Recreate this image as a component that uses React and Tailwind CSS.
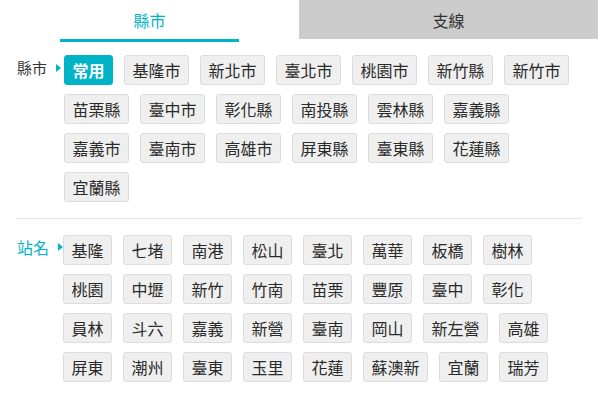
import React from "react";

const counties = [
  "基隆市","新北市","臺北市","桃園市","新竹縣","新竹市",
  "苗栗縣","臺中市","彰化縣","南投縣","雲林縣","嘉義縣",
  "嘉義市","臺南市","高雄市","屏東縣","臺東縣","花蓮縣","宜蘭縣",
];

const stations = [
  "基隆","七堵","南港","松山","臺北","萬華","板橋","樹林",
  "桃園","中壢","新竹","竹南","苗栗","豐原","臺中","彰化",
  "員林","斗六","嘉義","新營","臺南","岡山","新左營","高雄",
  "屏東","潮州","臺東","玉里","花蓮","蘇澳新","宜蘭","瑞芳",
];

const font = { fontFamily: '"Noto Sans CJK TC", "Noto Sans", sans-serif' };

function Btn({ children, active }) {
  return (
    <div
      className={
        active
          ? "h-[30px] px-[7.5px] border border-[#00b4c8] bg-[#00b4c8] text-white font-bold rounded-[3px] text-[16px] leading-[28px] flex items-center"
          : "h-[30px] px-[7.5px] border border-[#dcdcdc] bg-[#efefef] text-[#2a2a2a] rounded-[3px] text-[16px] leading-[28px] flex items-center"
      }
    >
      {children}
    </div>
  );
}

function Tri() {
  return (
    <span className="ml-[9px] inline-block w-0 h-0 border-y-[4px] border-y-transparent border-l-[5px] border-l-[#00b4c8]" />
  );
}

export default function App() {
  return (
    <div className="w-[598px] h-[399px] bg-white overflow-hidden" style={font}>
      <div className="flex items-start">
        <div className="w-[299px] px-[60px]">
          <div className="h-[42px] border-b-[3px] border-[#00b4c8] flex items-center justify-center text-[16px] text-[#00b4c8]">
            縣市
          </div>
        </div>
        <div className="w-[299px] h-[39px] bg-[#cccccc] flex items-center justify-center text-[16px] text-[#333]">
          支線
        </div>
      </div>

      <div className="pl-[17px] pr-[18px]">
        <div className="flex pt-[13px] pb-[16px] border-b border-dotted border-[#cfcfcf]">
          <div className="w-[47px] shrink-0 flex items-center h-[26px] text-[15px] text-[#333]">
            <span>縣市</span>
            <Tri />
          </div>
          <div className="flex flex-wrap gap-x-[11px] gap-y-[9px] flex-1">
            <Btn active>常用</Btn>
            {counties.map((c) => (
              <Btn key={c}>{c}</Btn>
            ))}
          </div>
        </div>

        <div className="flex pt-[16px]">
          <div className="w-[46px] shrink-0 flex items-center h-[24px] text-[16px] text-[#00b4c8]">
            <span>站名</span>
            <Tri />
          </div>
          <div className="flex flex-wrap gap-x-[11px] gap-y-[9px] flex-1">
            {stations.map((c) => (
              <Btn key={c}>{c}</Btn>
            ))}
          </div>
        </div>
      </div>
    </div>
  );
}
